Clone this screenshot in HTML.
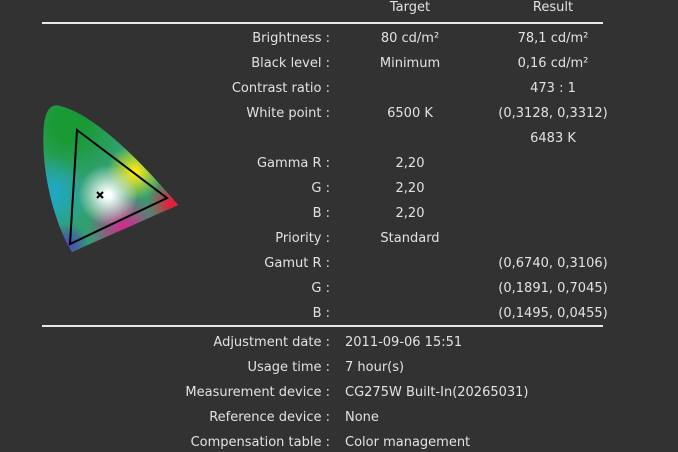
<!DOCTYPE html>
<html><head><style>
body{margin:0;width:678px;height:452px;background:#323232;overflow:hidden;font-family:"DejaVu Sans",sans-serif;font-size:13px;color:#e2e2e2;position:relative}
.r{position:absolute;height:16px;line-height:16px;white-space:nowrap}
.l{right:348px;text-align:right}
.t{left:350px;width:120px;text-align:center}
.s{left:483px;width:140px;text-align:center}
.v{left:345px}
.hr{position:absolute;left:42px;width:561px;height:2px;background:#e8e8e8}
</style></head><body>
<div class="r t" style="top:0">Target</div><div class="r s" style="top:0">Result</div>
<div class="hr" style="top:22px"></div>
<div class="r l" style="top:31px">Brightness :</div><div class="r t" style="top:31px">80 cd/m²</div><div class="r s" style="top:31px">78,1 cd/m²</div>
<div class="r l" style="top:56px">Black level :</div><div class="r t" style="top:56px">Minimum</div><div class="r s" style="top:56px">0,16 cd/m²</div>
<div class="r l" style="top:81px">Contrast ratio :</div><div class="r s" style="top:81px">473 : 1</div>
<div class="r l" style="top:106px">White point :</div><div class="r t" style="top:106px">6500 K</div><div class="r s" style="top:106px">(0,3128, 0,3312)</div>
<div class="r s" style="top:131px">6483 K</div>
<div class="r l" style="top:156px">Gamma R :</div><div class="r t" style="top:156px">2,20</div>
<div class="r l" style="top:181px">G :</div><div class="r t" style="top:181px">2,20</div>
<div class="r l" style="top:206px">B :</div><div class="r t" style="top:206px">2,20</div>
<div class="r l" style="top:231px">Priority :</div><div class="r t" style="top:231px">Standard</div>
<div class="r l" style="top:256px">Gamut R :</div><div class="r s" style="top:256px">(0,6740, 0,3106)</div>
<div class="r l" style="top:281px">G :</div><div class="r s" style="top:281px">(0,1891, 0,7045)</div>
<div class="r l" style="top:306px">B :</div><div class="r s" style="top:306px">(0,1495, 0,0455)</div>
<div class="hr" style="top:325px"></div>
<div class="r l" style="top:335px">Adjustment date :</div><div class="r v" style="top:335px">2011-09-06 15:51</div>
<div class="r l" style="top:360px">Usage time :</div><div class="r v" style="top:360px">7 hour(s)</div>
<div class="r l" style="top:385px">Measurement device :</div><div class="r v" style="top:385px">CG275W Built-In(20265031)</div>
<div class="r l" style="top:410px">Reference device :</div><div class="r v" style="top:410px">None</div>
<div class="r l" style="top:435px">Compensation table :</div><div class="r v" style="top:435px">Color management</div>
<svg style="position:absolute;left:0;top:0" width="200" height="270">
<defs>
<clipPath id="c"><path d="M72,252 C55,225 40,170 44,125 C46,108 52,104 60,106 C95,115 140,160 178,205 Z"/></clipPath>
<radialGradient id="g1" cx="70" cy="125" r="55" gradientUnits="userSpaceOnUse"><stop offset="0.3" stop-color="#1a9a35"/><stop offset="1" stop-color="#1a9a35" stop-opacity="0"/></radialGradient>
<radialGradient id="g2" cx="50" cy="195" r="40" gradientUnits="userSpaceOnUse"><stop offset="0.2" stop-color="#20a8c0"/><stop offset="1" stop-color="#20a8c0" stop-opacity="0"/></radialGradient>
<radialGradient id="g3" cx="68" cy="245" r="22" gradientUnits="userSpaceOnUse"><stop offset="0" stop-color="#5040c0"/><stop offset="1" stop-color="#5040c0" stop-opacity="0"/></radialGradient>
<radialGradient id="g4" cx="125" cy="230" r="38" gradientUnits="userSpaceOnUse"><stop offset="0.1" stop-color="#d02c8c"/><stop offset="1" stop-color="#d02c8c" stop-opacity="0"/></radialGradient>
<radialGradient id="g5" cx="172" cy="204" r="26" gradientUnits="userSpaceOnUse"><stop offset="0.1" stop-color="#e81c3c"/><stop offset="1" stop-color="#e81c3c" stop-opacity="0"/></radialGradient>
<radialGradient id="g6" cx="135" cy="172" r="28" gradientUnits="userSpaceOnUse"><stop offset="0.1" stop-color="#f4e818"/><stop offset="1" stop-color="#f4e818" stop-opacity="0"/></radialGradient>
<radialGradient id="g7" cx="108" cy="195" r="30" gradientUnits="userSpaceOnUse"><stop offset="0.1" stop-color="#ffffff"/><stop offset="1" stop-color="#ffffff" stop-opacity="0"/></radialGradient>
</defs>
<g clip-path="url(#c)">
<rect x="0" y="90" width="200" height="180" fill="#30a070"/>
<rect x="0" y="90" width="200" height="180" fill="url(#g1)"/>
<rect x="0" y="90" width="200" height="180" fill="url(#g2)"/>
<rect x="0" y="90" width="200" height="180" fill="url(#g3)"/>
<rect x="0" y="90" width="200" height="180" fill="url(#g4)"/>
<rect x="0" y="90" width="200" height="180" fill="url(#g5)"/>
<rect x="0" y="90" width="200" height="180" fill="url(#g6)"/>
<rect x="0" y="90" width="200" height="180" fill="url(#g7)"/>
</g>
<path d="M77,130 L167,198 L70,244 Z" fill="none" stroke="#000" stroke-width="2"/>
<path d="M97,192 L103,198 M103,192 L97,198" stroke="#000" stroke-width="2"/>
</svg>
</body></html>
